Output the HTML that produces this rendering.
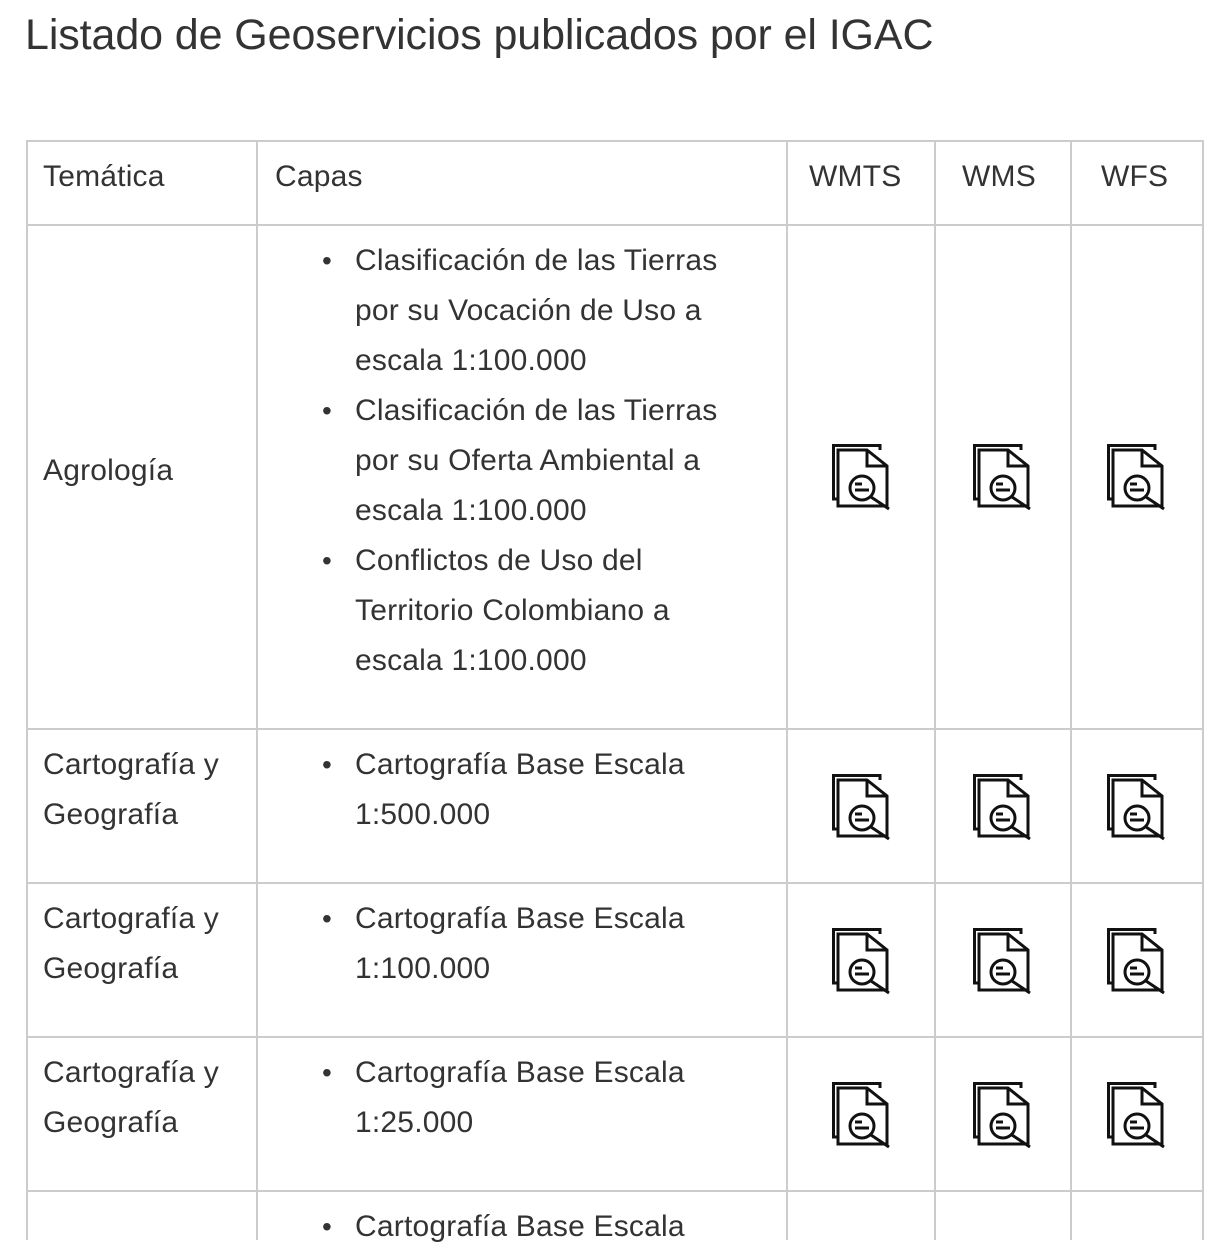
<!DOCTYPE html>
<html><head><meta charset="utf-8"><style>
body{margin:0;background:#fff;width:1232px;height:1216px;overflow:hidden;position:relative;font-family:"Liberation Sans",sans-serif;color:#333}
.t{position:absolute;left:25px;top:11px;font-size:43px;letter-spacing:-0.1px;white-space:nowrap}
.h{position:absolute;background:#ccc;height:2px;left:26px;width:1177px}
.v{position:absolute;background:#ccc;width:2px;top:140px;height:1100px}
.x{position:absolute;font-size:30px;letter-spacing:0.2px;line-height:50px;white-space:nowrap}
.b{position:absolute;font-size:28px;line-height:50px}
svg{position:absolute}
</style></head><body>
<div class="t">Listado de Geoservicios publicados por el IGAC</div>
<div class="h" style="top:140px"></div>
<div class="h" style="top:224px"></div>
<div class="h" style="top:728px"></div>
<div class="h" style="top:882px"></div>
<div class="h" style="top:1036px"></div>
<div class="h" style="top:1190px"></div>
<div class="v" style="left:26px"></div>
<div class="v" style="left:256px"></div>
<div class="v" style="left:786px"></div>
<div class="v" style="left:934px"></div>
<div class="v" style="left:1070px"></div>
<div class="v" style="left:1202px"></div>

<div class="x" style="left:43px;top:152px">Temática</div>
<div class="x" style="left:275px;top:152px">Capas</div>
<div class="x" style="left:809px;top:152px">WMTS</div>
<div class="x" style="left:962px;top:152px">WMS</div>
<div class="x" style="left:1101px;top:152px">WFS</div>

<div class="x" style="left:43px;top:446px">Agrología</div>
<div class="x" style="left:355px;top:236px">Clasificación de las Tierras<br>por su Vocación de Uso a<br>escala 1:100.000<br>Clasificación de las Tierras<br>por su Oferta Ambiental a<br>escala 1:100.000<br>Conflictos de Uso del<br>Territorio Colombiano a<br>escala 1:100.000</div>
<div class="b" style="left:322px;top:236px">•</div>
<div class="b" style="left:322px;top:386px">•</div>
<div class="b" style="left:322px;top:536px">•</div>

<div class="x" style="left:43px;top:740px">Cartografía y<br>Geografía</div>
<div class="x" style="left:355px;top:740px">Cartografía Base Escala<br>1:500.000</div>
<div class="b" style="left:322px;top:740px">•</div>

<div class="x" style="left:43px;top:894px">Cartografía y<br>Geografía</div>
<div class="x" style="left:355px;top:894px">Cartografía Base Escala<br>1:100.000</div>
<div class="b" style="left:322px;top:894px">•</div>

<div class="x" style="left:43px;top:1048px">Cartografía y<br>Geografía</div>
<div class="x" style="left:355px;top:1048px">Cartografía Base Escala<br>1:25.000</div>
<div class="b" style="left:322px;top:1048px">•</div>

<div class="x" style="left:355px;top:1202px">Cartografía Base Escala</div>
<div class="b" style="left:322px;top:1202px">•</div>

<svg width="0" height="0"><defs><g id="ic" fill="none" stroke="#111" stroke-width="3">
<path d="M6 55H1.5V1.5H48V6"/>
<path d="M6 6H35L55 22V62H6Z"/>
<path d="M35 6V22H55"/>
<circle cx="30" cy="44" r="12" fill="#fff"/>
<path d="M23 40H30M23 46H37"/>
<path d="M39 53L57 65"/>
</g></defs></svg>
<svg style="left:832px;top:444px" width="60" height="68"><use href="#ic"/></svg>
<svg style="left:973px;top:444px" width="60" height="68"><use href="#ic"/></svg>
<svg style="left:1107px;top:444px" width="60" height="68"><use href="#ic"/></svg>
<svg style="left:832px;top:774px" width="60" height="68"><use href="#ic"/></svg>
<svg style="left:973px;top:774px" width="60" height="68"><use href="#ic"/></svg>
<svg style="left:1107px;top:774px" width="60" height="68"><use href="#ic"/></svg>
<svg style="left:832px;top:928px" width="60" height="68"><use href="#ic"/></svg>
<svg style="left:973px;top:928px" width="60" height="68"><use href="#ic"/></svg>
<svg style="left:1107px;top:928px" width="60" height="68"><use href="#ic"/></svg>
<svg style="left:832px;top:1082px" width="60" height="68"><use href="#ic"/></svg>
<svg style="left:973px;top:1082px" width="60" height="68"><use href="#ic"/></svg>
<svg style="left:1107px;top:1082px" width="60" height="68"><use href="#ic"/></svg>
</body></html>
